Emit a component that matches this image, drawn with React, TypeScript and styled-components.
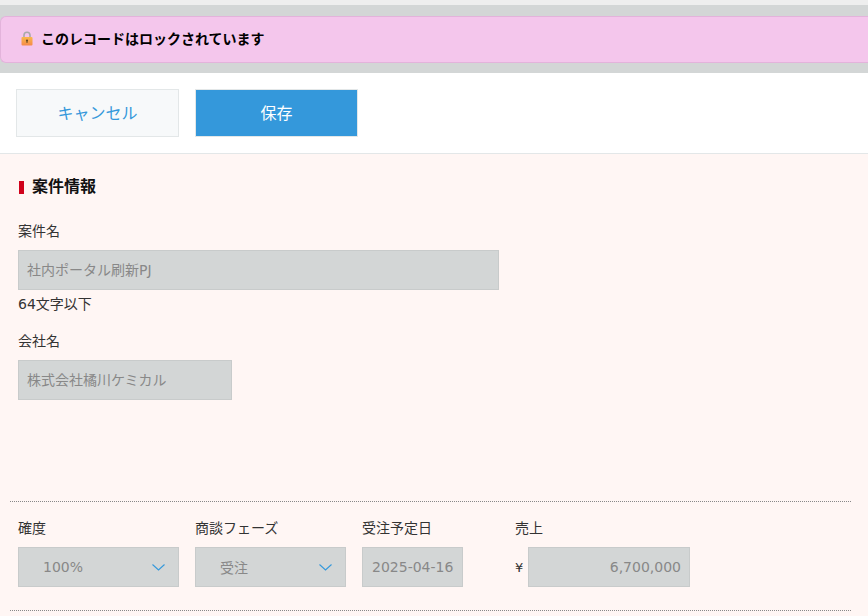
import React from "react";
import styled, { createGlobalStyle } from "styled-components";

const Global = createGlobalStyle`
  html, body { margin: 0; padding: 0; background: #fff; }
  body { font-family: "DejaVu Sans", "Noto Sans CJK JP", sans-serif; color: #333; overflow: hidden; }
`;

const Page = styled.div`
  width: 868px;
  height: 616px;
  overflow: hidden;
  display: flex;
  flex-direction: column;
`;
const TopStrip = styled.div`
  height: 5px;
  background: #eeeeee;
`;
const LockBand = styled.div`
  background: #d3d6d6;
  padding: 11px 0 10px;
`;
const Banner = styled.div`
  height: 47px;
  box-sizing: border-box;
  display: flex;
  align-items: center;
  gap: 8px;
  padding: 0 0 4px 20px;
  background: #f4c6ec;
  border: 1px solid #e3b3db;
  border-right: none;
  border-radius: 6px 0 0 6px;
  font-size: 14px;
  font-weight: 700;
  color: #000;
`;
const LockSlot = styled.span`
  display: flex;
  margin-top: 2px;
`;
const Toolbar = styled.div`
  height: 81px;
  box-sizing: border-box;
  background: #fff;
  border-bottom: 1px solid #e3e7e8;
  display: flex;
  align-items: flex-start;
  gap: 16px;
  padding: 16px 0 0 16px;
`;
const ActionButton = styled.button<{ $primary?: boolean }>`
  width: 163px;
  height: 48px;
  box-sizing: border-box;
  border: 1px solid #e3e7e8;
  background: ${(p) => (p.$primary ? "#3498db" : "#f7f9fa")};
  color: ${(p) => (p.$primary ? "#fff" : "#3498db")};
  font-family: inherit;
  font-size: 16px;
  padding: 0 0 2px;
`;
const Content = styled.div`
  flex: 1;
  background: #fff6f4;
  padding: 0 17px 0 10px;
`;
const Heading = styled.h2`
  margin: 0;
  padding: 21px 0 0 9px;
  display: flex;
  align-items: center;
  gap: 8px;
  font-size: 16px;
  line-height: 24px;
  font-weight: 700;
  color: #111;
  height: 24px;
`;
const Mark = styled.span`
  width: 5px;
  height: 13px;
  background: #d0021b;
`;
const Field = styled.div`
  padding-left: 8px;
`;
const Label = styled.div<{ $top?: number }>`
  font-size: 14px;
  line-height: 20px;
  color: #333;
  margin-top: ${(p) => p.$top ?? 0}px;
  margin-bottom: 9px;
`;
const TextBox = styled.div<{ $width: number; $right?: boolean; $lower?: boolean }>`
  width: ${(p) => p.$width}px;
  height: 40px;
  box-sizing: border-box;
  display: flex;
  align-items: center;
  justify-content: ${(p) => (p.$right ? "flex-end" : "flex-start")};
  padding: ${(p) => (p.$lower ? "0 8px 0 9px" : "0 8px 2px")};
  background: #d3d6d6;
  border: 1px solid #c8cbcb;
  color: #888;
  font-size: 14px;
  white-space: nowrap;
`;
const Hint = styled.div`
  font-size: 14px;
  line-height: 20px;
  color: #333;
  margin-top: 4px;
`;
const Divider = styled.hr<{ $top: number }>`
  margin: ${(p) => p.$top}px 0 0;
  border: none;
  border-top: 1px dotted #888;
`;
const Row = styled.div`
  display: flex;
  padding: 16px 0 0 8px;
`;
const Column = styled.div<{ $width: number }>`
  width: ${(p) => p.$width}px;
`;
const SelectBox = styled.div<{ $width: number; $indent: number }>`
  width: ${(p) => p.$width}px;
  height: 40px;
  box-sizing: border-box;
  display: flex;
  align-items: center;
  justify-content: space-between;
  padding: 0 13px 0 ${(p) => p.$indent}px;
  background: #d3d6d6;
  border: 1px solid #c8cbcb;
  color: #888;
  font-size: 14px;
`;
const Money = styled.div`
  display: flex;
  align-items: center;
  gap: 4px;
  font-size: 13px;
  color: #333;
`;
const Yen = styled.span`
  width: 9px;
`;

const Chevron = () => (
  <svg width="13" height="7" viewBox="0 0 13 7" fill="none" stroke="#3498db" strokeWidth="1.1">
    <path d="M0.5 0.5 L6.5 6 L12.5 0.5" />
  </svg>
);

const LockIcon = () => (
  <svg width="12" height="15" viewBox="0 0 12 15">
    <defs>
      <linearGradient id="lockBody" x1="0" y1="0" x2="0" y2="1">
        <stop offset="0" stopColor="#f9b84a" />
        <stop offset="1" stopColor="#f58a4a" />
      </linearGradient>
    </defs>
    <path d="M3 7 V4.2 a3 3 0 0 1 6 0 V7" fill="none" stroke="#a9a9a9" strokeWidth="1.6" />
    <rect x="0.5" y="6" width="11" height="8.5" rx="1" fill="url(#lockBody)" />
    <circle cx="6" cy="9.5" r="1.1" fill="#6b4a20" />
    <rect x="5.5" y="9.5" width="1" height="2.5" fill="#6b4a20" />
  </svg>
);

export default function App() {
  return (
    <Page>
      <Global />
      <TopStrip />
      <LockBand>
        <Banner>
          <LockSlot>
            <LockIcon />
          </LockSlot>
          このレコードはロックされています
        </Banner>
      </LockBand>
      <Toolbar>
        <ActionButton>キャンセル</ActionButton>
        <ActionButton $primary>保存</ActionButton>
      </Toolbar>
      <Content>
        <Heading>
          <Mark />
          案件情報
        </Heading>
        <Field>
          <Label $top={22}>案件名</Label>
          <TextBox $width={481}>社内ポータル刷新PJ</TextBox>
          <Hint>64文字以下</Hint>
          <Label $top={17}>会社名</Label>
          <TextBox $width={214}>株式会社橘川ケミカル</TextBox>
        </Field>
        <Divider $top={101} />
        <Row>
          <Column $width={177}>
            <Label>確度</Label>
            <SelectBox $width={161} $indent={24}>
              100%
              <Chevron />
            </SelectBox>
          </Column>
          <Column $width={167}>
            <Label>商談フェーズ</Label>
            <SelectBox $width={151} $indent={24}>
              受注
              <Chevron />
            </SelectBox>
          </Column>
          <Column $width={153}>
            <Label>受注予定日</Label>
            <TextBox $width={101} $lower>2025-04-16</TextBox>
          </Column>
          <Column $width={175}>
            <Label>売上</Label>
            <Money>
              <Yen>¥</Yen>
              <TextBox $width={162} $right $lower>6,700,000</TextBox>
            </Money>
          </Column>
        </Row>
        <Divider $top={23} />
      </Content>
    </Page>
  );
}
